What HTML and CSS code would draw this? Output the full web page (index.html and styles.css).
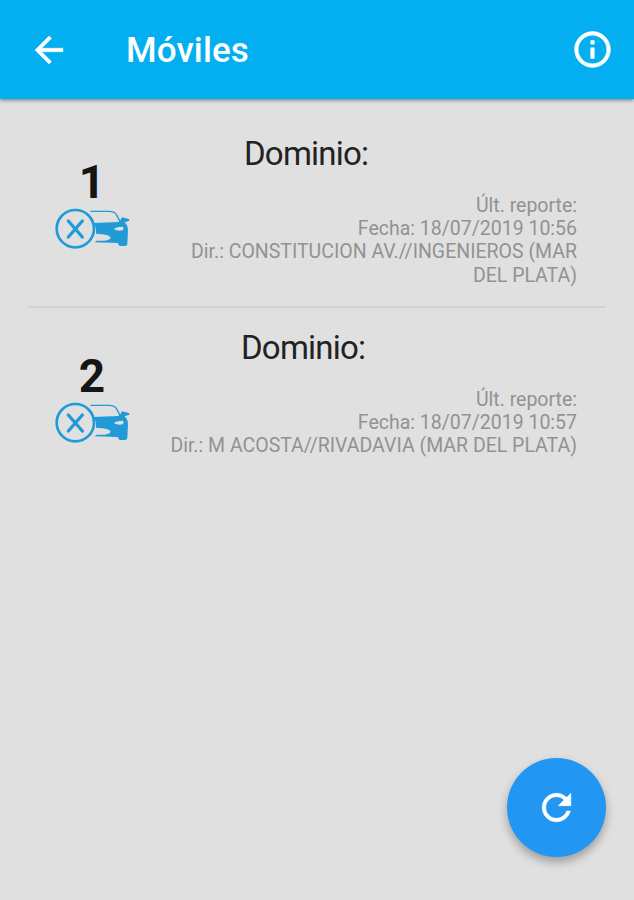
FILE: index.html
```
<!DOCTYPE html>
<html lang="es">
<head>
    <meta charset="UTF-8">
    <title>Móviles</title>
    <link rel="stylesheet" href="styles.css">
</head>
<body>
    <header class="toolbar">
        <svg class="back-icon" viewBox="0 0 24 24"><path d="M20 11H7.83l5.59-5.59L12 4l-8 8 8 8 1.41-1.41L7.83 13H20v-2z"/></svg>
        <h1 class="title">Móviles</h1>
        <svg class="info-icon" viewBox="0 0 24 24"><path d="M11 7h2v2h-2zm0 4h2v6h-2zm1-9C6.48 2 2 6.48 2 12s4.48 10 10 10 10-4.48 10-10S17.52 2 12 2zm0 18c-4.41 0-8-3.59-8-8s3.59-8 8-8 8 3.59 8 8-3.59 8-8 8z"/></svg>
    </header>

    <!-- Auto con cruz, se usa en cada fila -->
    <svg class="symbols">
        <symbol id="car-off" viewBox="45 170 225 130">
            <circle class="line" cx="106" cy="235" r="56" stroke-width="8"/>
            <path class="line" d="M85 212L127 260M127 212L85 260" stroke-width="10"/>
            <path class="line" d="M153 183H207Q222 183 229 192L240 213" stroke-width="4"/>
            <path class="fill" d="M161 218L235 215L242 208L246 201L267 206L268 211L254 216Q265 225 264 243L262 282Q261 287 255 287H240Q235 287 234 278L162 276Q169 274 169 271Q210 273 212 262Q210 251 168 250Q170 233 161 218Z"/>
            <path class="light" d="M222 237Q226 229 249 229Q253 234 248 240Q235 244 222 237Z"/>
        </symbol>
    </svg>

    <main class="list">
        <div class="row">
            <div class="unit">
                <span class="number">1</span>
                <svg class="car"><use href="#car-off"/></svg>
            </div>
            <div class="info">
                <h2 class="domain">Dominio:</h2>
                <p class="report">Últ. reporte:<br>Fecha: 18/07/2019 10:56<br>Dir.: CONSTITUCION AV.//INGENIEROS (MAR<br>DEL PLATA)</p>
            </div>
        </div>
        <div class="row">
            <div class="unit">
                <span class="number">2</span>
                <svg class="car"><use href="#car-off"/></svg>
            </div>
            <div class="info">
                <h2 class="domain second">Dominio:</h2>
                <p class="report">Últ. reporte:<br>Fecha: 18/07/2019 10:57<br>Dir.: M ACOSTA//RIVADAVIA (MAR DEL PLATA)</p>
            </div>
        </div>
    </main>

    <button class="refresh">
        <svg viewBox="0 0 24 24"><path d="M17.65 6.35C16.2 4.9 14.21 4 12 4c-4.42 0-7.99 3.58-7.99 8s3.57 8 7.99 8c3.73 0 6.84-2.55 7.73-6h-2.08c-.82 2.33-3.04 4-5.65 4-3.31 0-6-2.69-6-6s2.69-6 6-6c1.66 0 3.14.69 4.22 1.78L13 11h7V4l-2.35 2.35z"/></svg>
    </button>
</body>
</html>
```

FILE: styles.css
```
body {
    margin: 0;
    min-height: 100vh;
    background-color: #e0e0e0;
    font-family: Roboto, "Liberation Sans", sans-serif;
}

.toolbar {
    display: flex;
    align-items: center;
    box-sizing: border-box;
    height: 99px;
    padding: 0 20px 0 28px;
    background-color: #03aff0;
    color: #fff;
    box-shadow: 0 1px 4px rgba(0, 0, 0, 0.5);
}

.toolbar svg,
.refresh svg {
    fill: currentColor;
    stroke: currentColor;
    stroke-width: 0.3px;
}

.back-icon {
    width: 42px;
    height: 42px;
}

.title {
    flex: 1;
    margin: 3px 0 0 56px;
    font-size: 35px;
    font-weight: 500;
    line-height: 40px;
    letter-spacing: 0.1px;
}

.info-icon {
    width: 43px;
    height: 43px;
}

.symbols {
    display: none;
}

.list {
    padding: 15px 28px 0;
}

.row {
    display: flex;
    box-sizing: border-box;
    height: 194px;
    padding: 20px 29px 0 27px;
    border-bottom: 2px solid #d2d2d2;
}

.row:last-child {
    border-bottom: none;
}

.unit {
    display: flex;
    flex-direction: column;
    width: 75px;
    padding-top: 23px;
}

.number {
    padding-right: 1px;
    font-size: 46px;
    font-weight: 700;
    line-height: 51px;
    text-align: center;
    color: #151515;
}

.car {
    width: 75px;
    height: 43.3px;
    margin-top: -1px;
}

.info {
    flex: 1;
}

.line {
    fill: none;
    stroke: #219bd8;
    stroke-linecap: round;
}

.fill {
    fill: #219bd8;
}

.light {
    fill: #e0e0e0;
}

.domain {
    margin: 0 0 20px 114px;
    font-size: 33px;
    font-weight: 400;
    line-height: 40px;
    letter-spacing: -0.8px;
    color: #222;
}

.domain.second {
    margin-left: 111px;
}

.report {
    margin: 0;
    font-size: 19.5px;
    line-height: 23.2px;
    text-align: right;
    white-space: nowrap;
    color: #929292;
}

.refresh {
    position: fixed;
    right: 28px;
    bottom: 43px;
    display: flex;
    align-items: center;
    justify-content: center;
    width: 99px;
    height: 99px;
    padding: 0;
    border: none;
    border-radius: 50%;
    background-color: #2196f3;
    color: #fff;
    box-shadow: 0 5px 10px rgba(0, 0, 0, 0.3);
    cursor: pointer;
}

.refresh svg {
    width: 43px;
    height: 43px;
}
```
